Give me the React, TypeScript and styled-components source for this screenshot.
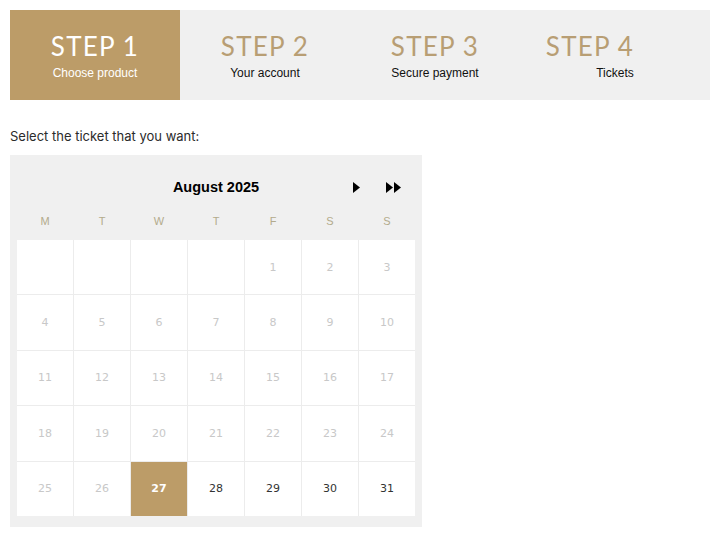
import React from "react";
import styled, { createGlobalStyle } from "styled-components";

const GlobalStyle = createGlobalStyle`
  html, body { margin: 0; padding: 0; background: #ffffff; }
  body { font-family: "Liberation Sans", Arial, sans-serif; }
`;

const GOLD = "#bc9c68";

const Page = styled.div`
  width: 718px;
  padding: 10px;
  box-sizing: border-box;
`;

const Steps = styled.div`
  display: flex;
  width: 700px;
  height: 90px;
  background: #f0f0f0;
`;

const Step = styled.div<{ $active?: boolean }>`
  width: 170px;
  display: flex;
  flex-direction: column;
  align-items: center;
  background: ${(p) => (p.$active ? GOLD : "transparent")};
  color: ${(p) => (p.$active ? "#ffffff" : "#111111")};
`;

const StepTitle = styled.div<{ $active?: boolean; $shift?: number }>`
  margin-top: 21px;
  font-family: "Lato", "Open Sans", sans-serif;
  font-size: 26px;
  line-height: 30px;
  letter-spacing: 1.2px;
  color: ${(p) => (p.$active ? "#ffffff" : "#b89e74")};
  transform: translateX(${(p) => p.$shift ?? 0}px);
`;

const StepLabel = styled.div<{ $shift?: number }>`
  margin-top: 5px;
  font-family: "Liberation Sans", Arial, sans-serif;
  font-size: 12px;
  line-height: 14px;
  transform: translateX(${(p) => p.$shift ?? 0}px);
`;

const Prompt = styled.div`
  margin-top: 28px;
  font-family: "Inter", "Liberation Sans", sans-serif;
  font-size: 13px;
  line-height: 16px;
  color: #2b2b2b;
`;

const Calendar = styled.div`
  margin-top: 11px;
  width: 412px;
  background: #f0f0f0;
  padding: 20px 7px 11px;
  box-sizing: border-box;
  display: flex;
  flex-direction: column;
`;

const TitleRow = styled.div`
  display: grid;
  grid-template-columns: 1fr auto 1fr;
  align-items: center;
  height: 24px;
`;

const MonthTitle = styled.div`
  grid-column: 2;
  font-family: "Liberation Sans", Arial, sans-serif;
  font-weight: 700;
  font-size: 14.5px;
  color: #000;
`;

const NavGroup = styled.div`
  grid-column: 3;
  justify-self: end;
  display: flex;
  align-items: center;
  gap: 26px;
  padding-right: 13px;
`;

const NavButton = styled.button`
  border: none;
  background: none;
  padding: 0;
  display: flex;
  cursor: pointer;
`;

const WeekRow = styled.div`
  margin-top: 10px;
  height: 24px;
  display: grid;
  grid-template-columns: repeat(7, 56px);
  column-gap: 1px;
  align-items: center;
`;

const WeekDay = styled.div`
  text-align: center;
  font-family: "Liberation Sans", Arial, sans-serif;
  font-size: 11px;
  color: #b3ab8c;
`;

const Grid = styled.div`
  margin-top: 7px;
  display: grid;
  grid-template-columns: repeat(7, 56px);
  grid-template-rows: repeat(5, 1fr);
  gap: 1px;
  height: 276px;
  background: #ececec;
`;

const Cell = styled.div<{ $state: "empty" | "past" | "open" | "selected" }>`
  display: flex;
  align-items: center;
  justify-content: center;
  font-family: "DejaVu Sans", Verdana, sans-serif;
  font-size: 11px;
  background: ${(p) => (p.$state === "selected" ? GOLD : "#ffffff")};
  color: ${(p) =>
    p.$state === "selected"
      ? "#ffffff"
      : p.$state === "open"
      ? "#333333"
      : "#c8c8c8"};
  font-weight: ${(p) => (p.$state === "selected" ? 700 : 400)};
`;

const Next = () => (
  <svg width="7" height="11" viewBox="0 0 7 11">
    <polygon points="0,0 7,5.5 0,11" fill="#000" />
  </svg>
);

const Last = () => (
  <svg width="16" height="11" viewBox="0 0 16 11">
    <polygon points="0,0 7,5.5 0,11" fill="#000" />
    <polygon points="8,0 15,5.5 8,11" fill="#000" />
  </svg>
);

const steps = [
  { title: "STEP 1", label: "Choose product", active: true },
  { title: "STEP 2", label: "Your account" },
  { title: "STEP 3", label: "Secure payment" },
  { title: "STEP 4", label: "Tickets", titleShift: -15, labelShift: 10 },
];

const weekdays = ["M", "T", "W", "T", "F", "S", "S"];

type CellState = "empty" | "past" | "open" | "selected";

const cells: { n: string; s: CellState }[] = [];
for (let i = 0; i < 4; i++) cells.push({ n: "", s: "empty" });
for (let d = 1; d <= 31; d++) {
  const s: CellState = d < 27 ? "past" : d === 27 ? "selected" : "open";
  cells.push({ n: String(d), s });
}

export default function App() {
  return (
    <>
      <GlobalStyle />
      <Page>
        <Steps>
          {steps.map((st) => (
            <Step key={st.title} $active={st.active}>
              <StepTitle $active={st.active} $shift={st.titleShift}>
                {st.title}
              </StepTitle>
              <StepLabel $shift={st.labelShift}>{st.label}</StepLabel>
            </Step>
          ))}
        </Steps>
        <Prompt>Select the ticket that you want:</Prompt>
        <Calendar>
          <TitleRow>
            <MonthTitle>August 2025</MonthTitle>
            <NavGroup>
              <NavButton aria-label="Next month">
                <Next />
              </NavButton>
              <NavButton aria-label="Last month">
                <Last />
              </NavButton>
            </NavGroup>
          </TitleRow>
          <WeekRow>
            {weekdays.map((w, i) => (
              <WeekDay key={i}>{w}</WeekDay>
            ))}
          </WeekRow>
          <Grid>
            {cells.map((c, i) => (
              <Cell key={i} $state={c.s}>
                {c.n}
              </Cell>
            ))}
          </Grid>
        </Calendar>
      </Page>
    </>
  );
}
